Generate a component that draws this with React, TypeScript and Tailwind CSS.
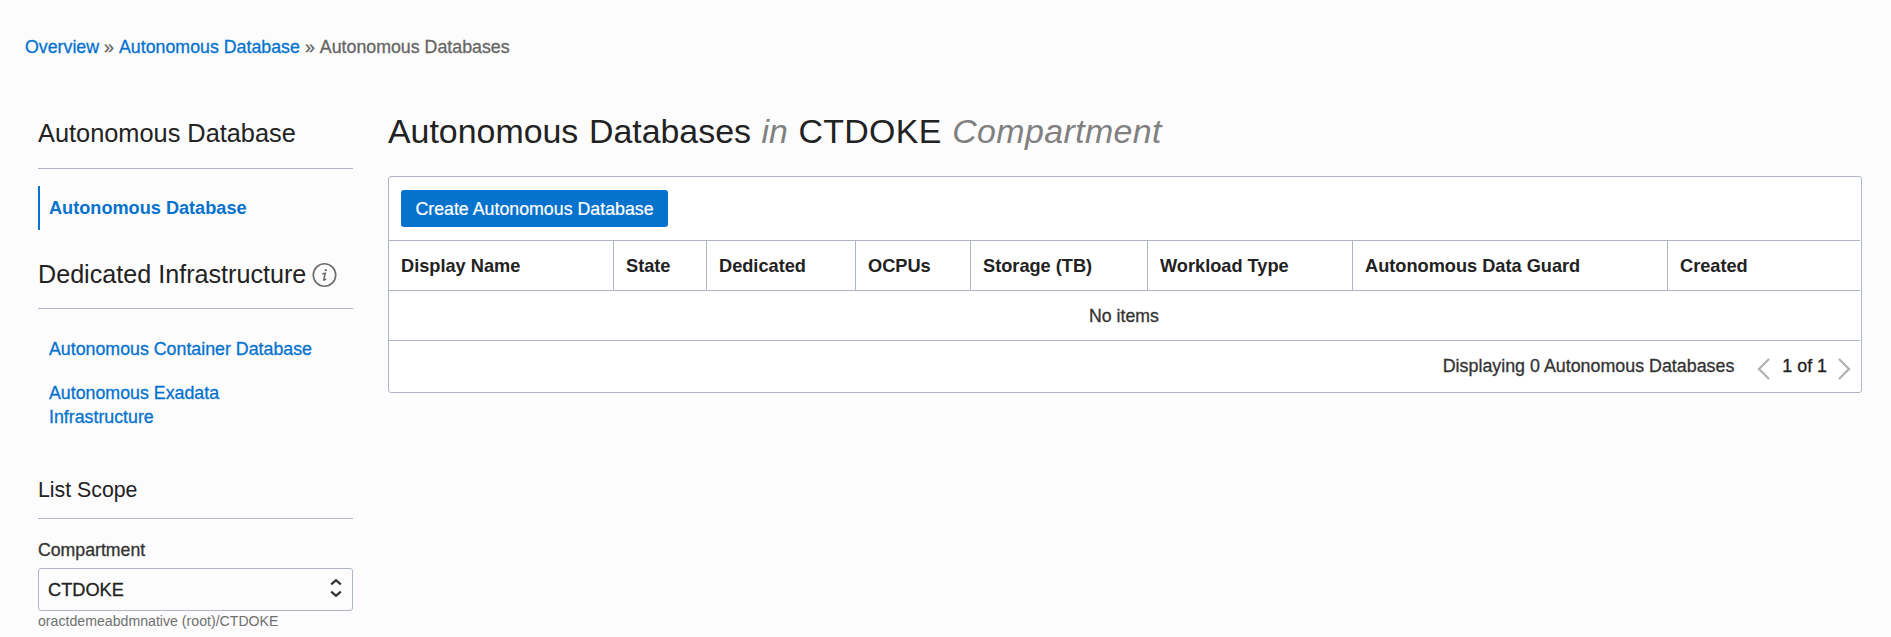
const columns = [
  { label: 'Display Name', cell: 'w-[225px] pl-3' },
  { label: 'State', cell: 'w-[93px] pl-3' },
  { label: 'Dedicated', cell: 'w-[149px] pl-3' },
  { label: 'OCPUs', cell: 'w-[115px] pl-3' },
  { label: 'Storage (TB)', cell: 'w-[177px] pl-3' },
  { label: 'Workload Type', cell: 'w-[205px] pl-3' },
  { label: 'Autonomous Data Guard', cell: 'w-[315px] pl-3' },
  { label: 'Created', cell: 'flex-1 pl-3' },
];

function InfoIcon() {
  return (
    <svg className="mt-[3px] ml-[6px] h-[25px] w-[25px]" viewBox="0 0 25 25" fill="none">
      <circle cx="12.5" cy="13" r="11.2" stroke="#6b6b6b" strokeWidth="1.6" />
      <circle cx="13.8" cy="8.1" r="1.2" fill="#6b6b6b" />
      <path d="M10.4 12c1-.2 1.8-.5 2.9-.8l-1.6 6.2c-.2.9.3 1 .9.6l1.5-1.2" stroke="#6b6b6b" strokeWidth="1.5" />
    </svg>
  );
}

function Chevron({ d }: { d: string }) {
  return (
    <svg className="h-[22px] w-[13px]" viewBox="0 0 13 22" fill="none">
      <path d={d} stroke="#b0b0b0" strokeWidth="2.2" />
    </svg>
  );
}

function Sidebar() {
  return (
    <aside className="flex w-[315px] shrink-0 flex-col">
      <h2 className="mt-[6px] h-[51px] border-b border-[#aeb6c2] text-[25.35px] leading-[30px] whitespace-nowrap">
        Autonomous Database
      </h2>
      <a className="mt-[17px] flex h-11 items-center border-l-2 border-[#0572ce] pt-[2px] pl-[9px] text-[18.15px] font-bold text-[#0572ce]">
        Autonomous Database
      </a>
      <div className="mt-[28px] flex h-[51px] border-b border-[#aeb6c2] pt-px">
        <h2 className="text-[25.15px] leading-[30px] whitespace-nowrap">Dedicated Infrastructure</h2>
        <InfoIcon />
      </div>
      <nav className="mt-[28px] flex flex-col gap-5 pl-[11px] text-[17.8px] leading-6 text-[#0572ce] [-webkit-text-stroke:0.3px]">
        <a className="whitespace-nowrap">Autonomous Container Database</a>
        <a className="w-[220px]">Autonomous Exadata Infrastructure</a>
      </nav>
      <h3 className="mt-[49px] h-[41px] border-b border-[#aeb6c2] text-[21.3px] leading-6">List Scope</h3>
      <label className="mt-[19px] text-[17.7px] leading-6 text-[#333] [-webkit-text-stroke:0.3px]">Compartment</label>
      <div className="mt-[6px] flex h-[43px] items-center justify-between rounded-[3px] border border-[#aeb6c2] pr-[10px] pl-[9px] text-[18.2px] [-webkit-text-stroke:0.3px]">
        <span className="pt-[3px]">CTDOKE</span>
        <svg className="mb-[3px] h-5 w-[12px]" viewBox="0 0 12 20" fill="none">
          <path d="M1.2 6.4 6 2.2l4.8 4.2M1.2 13.6 6 17.8l4.8-4.2" stroke="#333" strokeWidth="2.3" />
        </svg>
      </div>
      <p className="text-[14.15px] leading-5 whitespace-nowrap text-[#707070]">oractdemeabdmnative (root)/CTDOKE</p>
    </aside>
  );
}

function DatabaseTable() {
  return (
    <section className="mt-[26px] flex h-[217px] flex-col rounded-[3px] border border-[#aeb6c2] bg-white pr-px">
      <div className="flex h-[63px] pt-[13px] pl-3">
        <button className="flex h-[37px] w-[267px] items-center justify-center rounded-[3px] bg-[#0572ce] pt-px text-[17.8px] whitespace-nowrap text-white [-webkit-text-stroke:0.2px]">
          Create Autonomous Database
        </button>
      </div>
      <div className="flex h-[51px] border-y border-[#aeb6c2] text-[18.2px] font-bold">
        {columns.map((c) => (
          <div key={c.label} className={`flex shrink-0 items-center border-r border-[#aeb6c2] pt-[3px] whitespace-nowrap last:border-r-0 ${c.cell}`}>
            {c.label}
          </div>
        ))}
      </div>
      <div className="flex h-[50px] items-center justify-center border-b border-[#aeb6c2] pt-px pr-px text-[17.7px] text-[#333] [-webkit-text-stroke:0.3px]">
        No items
      </div>
      <div className="flex h-[51px] items-center justify-end pr-[9px] text-[17.85px] [-webkit-text-stroke:0.3px]">
        <span className="text-[#333]">Displaying 0 Autonomous Databases</span>
        <div className="ml-[23px] flex items-center">
          <span className="pt-[5px]">
            <Chevron d="M12 1 2 11l10 10" />
          </span>
          <span className="mr-[11px] ml-3">1 of 1</span>
          <span className="pt-[5px]">
            <Chevron d="M1 1l10 10L1 21" />
          </span>
        </div>
      </div>
    </section>
  );
}

export default function App() {
  return (
    <div className="h-[637px] w-full overflow-hidden bg-[#fcfcfc] font-['Liberation_Sans',Arial,sans-serif] text-[#222]">
      <div className="flex gap-[5px] pt-[35px] pl-[25px] text-[17.8px] leading-6 whitespace-nowrap text-[#666] [-webkit-text-stroke:0.3px]">
        <a className="text-[#0572ce]">Overview</a>
        <span>»</span>
        <a className="text-[#0572ce]">Autonomous Database</a>
        <span>»</span>
        <span>Autonomous Databases</span>
      </div>
      <div className="flex gap-[35px] pt-[53px] pr-[29px] pl-[38px]">
        <Sidebar />
        <main className="min-w-0 flex-1">
          <h1 className="text-[33.9px] leading-[38px] whitespace-nowrap [word-spacing:1.2px]">
            Autonomous Databases <em className="text-[#808080]">in</em>{' '}
            <span className="tracking-[0.3px]">CTDOKE</span>{' '}
            <em className="tracking-[0.4px] text-[#808080]">Compartment</em>
          </h1>
          <DatabaseTable />
        </main>
      </div>
    </div>
  );
}
